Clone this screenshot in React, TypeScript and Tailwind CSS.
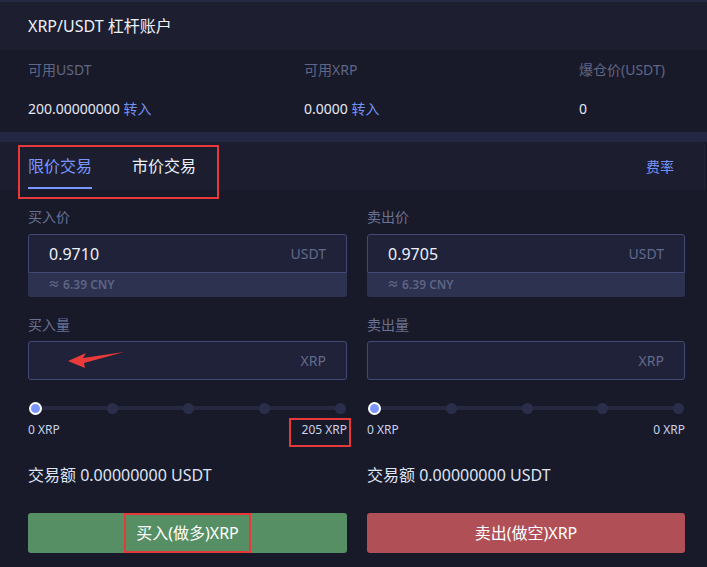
import React from "react";

const font = { fontFamily: '"Noto Sans", "Noto Sans CJK SC", sans-serif' };

function Slider({ rightLabel }: { rightLabel: string }) {
  return (
    <>
      <div className="relative mt-[21px] h-[14px]">
        <div className="absolute left-[6px] right-[5px] top-[5px] h-[4px] bg-[#262840]" />
        <div className="absolute left-0 right-0 top-0 h-[14px] flex items-center justify-between px-[1px]">
          <div className="w-[13px] h-[13px] rounded-full bg-[#7b97ff] border-2 border-white" />
          <div className="w-[11px] h-[11px] rounded-full bg-[#2b2e4b]" />
          <div className="w-[11px] h-[11px] rounded-full bg-[#2b2e4b]" />
          <div className="w-[11px] h-[11px] rounded-full bg-[#2b2e4b]" />
          <div className="w-[11px] h-[11px] rounded-full bg-[#2b2e4b]" />
        </div>
      </div>
      <div className="mt-[7px] h-[16px] flex justify-between text-[12px] leading-[16px] text-[#c9d1ec]">
        <span>0 XRP</span>
        <span>{rightLabel}</span>
      </div>
    </>
  );
}

function Column({
  priceLabel,
  price,
  amountLabel,
  rightLabel,
  buttonText,
  buttonColor,
}: {
  priceLabel: string;
  price: string;
  amountLabel: string;
  rightLabel: string;
  buttonText: string;
  buttonColor: string;
}) {
  return (
    <div className="flex flex-col">
      <div className="h-[18px] leading-[18px] text-[14px] text-[#6a7192]">{priceLabel}</div>
      <div className="mt-[8px] h-[39px] rounded-t-[3px] border border-[#414a74] bg-[#1f2238] flex items-center justify-between pl-[20px] pr-[20px]">
        <span className="text-[16px] text-[#eef1fb]">{price}</span>
        <span className="text-[14px] text-[#626a8c]">USDT</span>
      </div>
      <div className="h-[24px] rounded-b-[3px] bg-[#2d3250] flex items-center pl-[20px] text-[12px] font-semibold text-[#5d6484]">
        ≈ 6.39 CNY
      </div>
      <div className="mt-[19px] h-[18px] leading-[18px] text-[14px] text-[#6a7192]">{amountLabel}</div>
      <div className="mt-[7px] h-[39px] rounded-[3px] border border-[#414a74] bg-[#1f2238] flex items-center justify-end pr-[20px]">
        <span className="text-[14px] text-[#626a8c]">XRP</span>
      </div>
      <Slider rightLabel={rightLabel} />
      <div className="mt-[27px] h-[20px] leading-[20px] text-[16px] text-[#dfe4f5]">交易额 0.00000000 USDT</div>
      <div
        className={`mt-[28px] h-[40px] rounded-[3px] flex items-center justify-center text-[16px] text-white ${buttonColor}`}
      >
        {buttonText}
      </div>
    </div>
  );
}

export default function App() {
  return (
    <div className="relative w-[707px] h-[567px] overflow-hidden bg-[#181a29]" style={font}>
      <div className="h-[2px] bg-[#262a40]" />
      <div className="h-[48px] bg-[#1d1f30] flex items-center px-[28px] text-[16px] text-[#eef0f8]">
        XRP/USDT 杠杆账户
      </div>
      <div className="h-[82px] bg-[#181a29] px-[28px] grid grid-cols-[276px_275px_1fr]">
        <div className="flex flex-col">
          <div className="mt-[11px] h-[18px] leading-[18px] text-[14px] text-[#5f6686]">可用USDT</div>
          <div className="mt-[21px] h-[18px] leading-[18px] text-[14px] text-[#e4e8f6]">
            200.00000000 <span className="text-[#7491f5]">转入</span>
          </div>
        </div>
        <div className="flex flex-col">
          <div className="mt-[11px] h-[18px] leading-[18px] text-[14px] text-[#5f6686]">可用XRP</div>
          <div className="mt-[21px] h-[18px] leading-[18px] text-[14px] text-[#e4e8f6]">
            0.0000 <span className="text-[#7491f5]">转入</span>
          </div>
        </div>
        <div className="flex flex-col">
          <div className="mt-[11px] h-[18px] leading-[18px] text-[14px] text-[#5f6686]">爆仓价(USDT)</div>
          <div className="mt-[21px] h-[18px] leading-[18px] text-[14px] text-[#e4e8f6]">0</div>
        </div>
      </div>
      <div className="h-[10px] bg-[#242741]" />
      <div className="h-[48px] w-[705px] rounded-tr-[4px] bg-[#1c1e2f] flex items-stretch px-[28px] border-r border-[#22253a]">
        <div className="relative flex items-center text-[16px] text-[#7b97ff]">
          限价交易
          <div className="absolute left-0 right-0 bottom-[1px] h-[2px] bg-[#7b97ff]" />
        </div>
        <div className="ml-[40px] flex items-center text-[16px] text-[#eef0f8]">市价交易</div>
        <div className="ml-auto mr-[2px] flex items-center text-[14px] text-[#7491f5]">费率</div>
      </div>
      <div className="pt-[18px] pl-[28px] pr-[22px] grid grid-cols-[319px_318px] gap-x-[20px]">
        <Column
          priceLabel="买入价"
          price="0.9710"
          amountLabel="买入量"
          rightLabel="205 XRP"
          buttonText="买入(做多)XRP"
          buttonColor="bg-[#578f65]"
        />
        <Column
          priceLabel="卖出价"
          price="0.9705"
          amountLabel="卖出量"
          rightLabel="0 XRP"
          buttonText="卖出(做空)XRP"
          buttonColor="bg-[#b04f56]"
        />
      </div>

      {/* annotations */}
      <div className="absolute left-[18px] top-[145px] w-[201px] h-[54px] border-2 border-[#e8393a]" />
      <div className="absolute left-[289px] top-[418px] w-[62px] h-[29px] border-2 border-[#e8393a]" />
      <div className="absolute left-[124px] top-[513px] w-[127px] h-[40px] border-2 border-[#e8393a]" />
      <svg className="absolute left-[66px] top-[350px]" width="60" height="20" viewBox="0 0 60 20">
        <polygon points="2,11 20,3 17,8 58,2 18,13 19,18" fill="#ea3a3a" />
      </svg>
    </div>
  );
}
